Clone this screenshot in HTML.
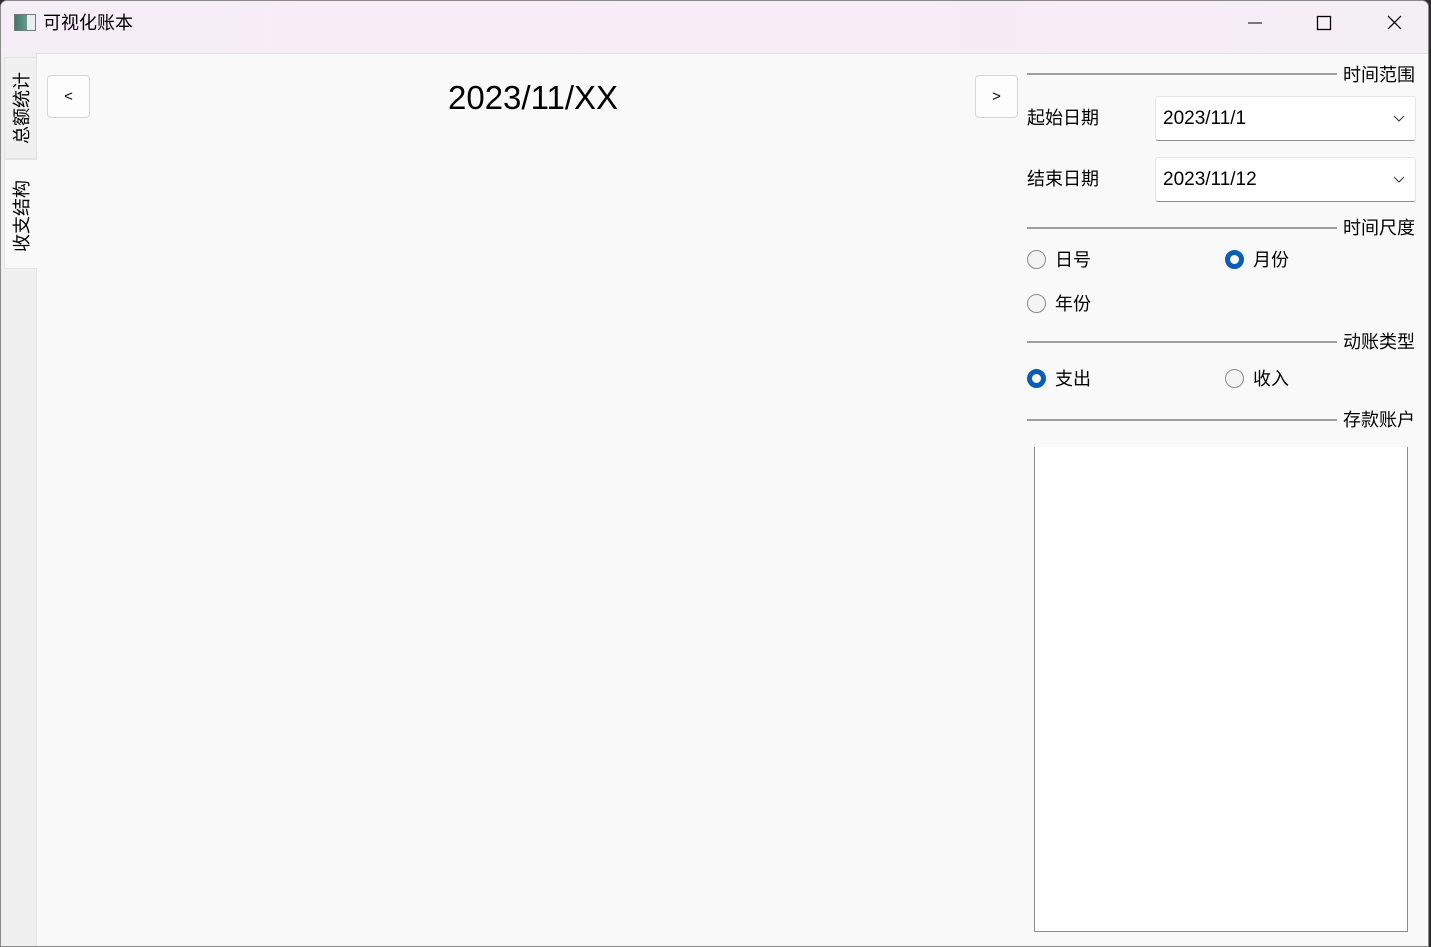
<!DOCTYPE html>
<html><head><meta charset="utf-8"><style>
*{margin:0;padding:0;box-sizing:border-box}
body{width:1431px;height:947px;background:#2b2b2b;position:relative;overflow:hidden;font-family:"Liberation Sans","Noto Sans CJK SC",sans-serif;color:#000}
.win{position:absolute;left:0;top:0;width:1429px;height:947px;background:#f0f0f0;border:1px solid #8a8a8a;border-radius:7px 7px 0 0;overflow:hidden}
.title{position:absolute;left:0;top:0;width:100%;height:51px;background:linear-gradient(90deg,#f6eef6,#f8ecf6 60%,#f4eef5)}
.t{position:absolute;font-size:18px;white-space:nowrap;line-height:22px}
.pane{position:absolute;left:35px;top:52px;width:1393px;height:893px;background:#f9f9f9;border-top:1px solid #e2e2e2;border-left:1px solid #e2e2e2}
.tab{position:absolute;left:3px;width:33px;border:1px solid #e4e4e4;border-right:none}
.vt{position:absolute;transform-origin:0 0;transform:rotate(-90deg);font-size:18px;white-space:nowrap;line-height:22px}
.btn{position:absolute;width:43px;height:43px;background:#fdfdfd;border:1px solid #d6d6d6;border-radius:4px;font-size:15px;text-align:center;line-height:41px}
.line{position:absolute;left:1026px;height:2px;background:#a0a0a0;width:310px}
.combo{position:absolute;left:1154px;width:261px;height:45px;background:#fff;border:1px solid #e6e6e6;border-bottom:1px solid #8f8f8f;border-radius:3px;font-size:19px;padding:11px 7px;line-height:22px}
.combo svg{position:absolute;right:10px;top:18px}
.r{position:absolute;width:19px;height:19px;border-radius:50%;border:1px solid #8a8a8a;background:#f3f3f3}
.r.on{background:#fff;border:5px solid #0a5fb4}
</style></head><body>
<div class="win">
<div class="title"></div>
<div style="position:absolute;left:13px;top:13px;width:22px;height:17px;border:1px solid #777;background:linear-gradient(90deg,#3a7a6a,#6a9a8a 60%,#e8eef0 60%)"></div>
<div class="t" style="left:42px;top:11px">可视化账本</div>
<svg style="position:absolute;left:1246px;top:14px" width="160" height="20"><path d="M1 8h14" stroke="#000" stroke-width="1"/><rect x="70.5" y="1.5" width="13" height="13" fill="none" stroke="#000" stroke-width="1.3"/><path d="M141 1l13 13M154 1l-13 13" stroke="#000" stroke-width="1.3"/></svg>
<div class="tab" style="top:56px;height:102px;background:#f0f0f0"></div>
<div class="tab" style="top:158px;height:110px;background:#f9f9f9;z-index:2"></div>
<div class="vt" style="left:10px;top:143px;z-index:3">总额统计</div>
<div class="vt" style="left:10px;top:251px;z-index:3">收支结构</div>
<div class="pane"></div>
<div class="btn" style="left:46px;top:74px">&lt;</div>
<div class="btn" style="left:974px;top:74px">&gt;</div>
<div class="t" style="left:447px;top:80px;font-size:33px;line-height:34px">2023/11/XX</div>
<div class="line" style="top:72px"></div><div class="t" style="left:1342px;top:63px">时间范围</div>
<div class="t" style="left:1026px;top:106px">起始日期</div>
<div class="combo" style="top:95px">2023/11/1<svg width="12" height="8"><path d="M1 1l5 5 5-5" fill="none" stroke="#333"/></svg></div>
<div class="t" style="left:1026px;top:167px">结束日期</div>
<div class="combo" style="top:156px">2023/11/12<svg width="12" height="8"><path d="M1 1l5 5 5-5" fill="none" stroke="#333"/></svg></div>
<div class="line" style="top:226px"></div><div class="t" style="left:1342px;top:216px">时间尺度</div>
<div class="r" style="left:1026px;top:249px"></div><div class="t" style="left:1054px;top:248px">日号</div>
<div class="r on" style="left:1224px;top:249px"></div><div class="t" style="left:1252px;top:248px">月份</div>
<div class="r" style="left:1026px;top:293px"></div><div class="t" style="left:1054px;top:292px">年份</div>
<div class="line" style="top:340px"></div><div class="t" style="left:1342px;top:330px">动账类型</div>
<div class="r on" style="left:1026px;top:368px"></div><div class="t" style="left:1054px;top:367px">支出</div>
<div class="r" style="left:1224px;top:368px"></div><div class="t" style="left:1252px;top:367px">收入</div>
<div class="line" style="top:418px"></div><div class="t" style="left:1342px;top:408px">存款账户</div>
<div style="position:absolute;left:1033px;top:446px;width:374px;height:485px;background:#fff;border:1px solid #8a8a8a;border-top:none"></div>
</div>
</body></html>
